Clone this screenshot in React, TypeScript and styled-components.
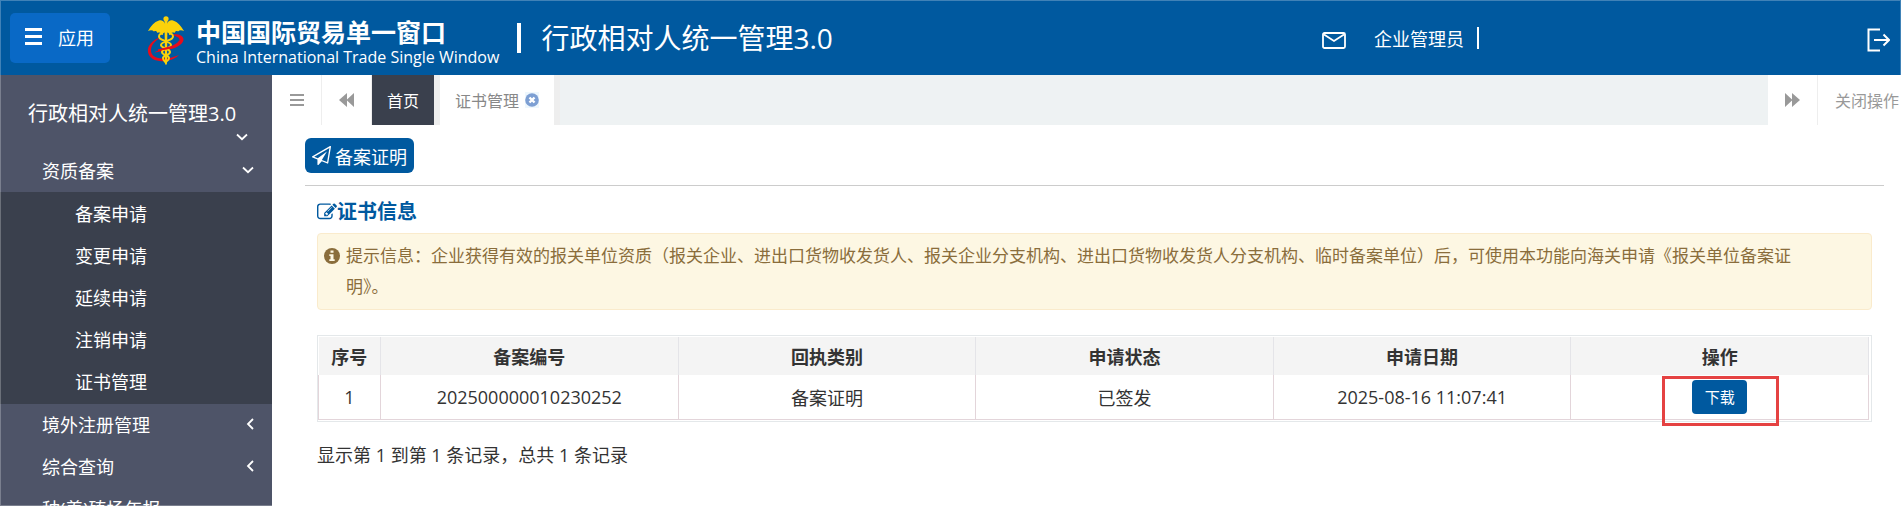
import React from "react";
import styled, { createGlobalStyle } from "styled-components";

const GlobalStyle = createGlobalStyle`
  *, *::before, *::after { box-sizing: border-box; }
  body {
    margin: 0;
    overflow: hidden;
    background: #fff;
    color: #333;
    font-family: "Open Sans", "Noto Sans CJK SC", sans-serif;
    font-size: 18px;
  }
  button { font: inherit; border: 0; cursor: pointer; }
  a { color: inherit; text-decoration: none; }
  svg { display: block; flex: none; }
`;

const Shell = styled.div`
  display: flex;
  flex-direction: column;
  height: 100vh;
  &::after {
    content: "";
    position: fixed;
    inset: 0;
    border: 1px solid rgba(255, 255, 255, 0.25);
    pointer-events: none;
  }
`;

const Header = styled.header`
  display: flex;
  align-items: center;
  flex: none;
  height: 75px;
  padding: 0 11px 0 10px;
  background: #00599f;
  color: #fff;
`;

const AppButton = styled.button`
  display: flex;
  align-items: center;
  gap: 16px;
  width: 100px;
  height: 50px;
  padding: 0 15px 2px;
  border-radius: 5px;
  background: #0969c6;
  color: #fff;
`;

const Brand = styled.a`
  display: flex;
  align-items: center;
  gap: 11px;
  margin-left: 37px;
  padding-top: 6px;
`;

const BrandText = styled.span`
  display: flex;
  flex-direction: column;
  padding-top: 4px;
  white-space: nowrap;
`;

const BrandName = styled.strong`
  font-size: 25px;
  line-height: 28px;
`;

const BrandEnglish = styled.span`
  font-size: 16px;
  line-height: 22px;
`;

const Divider = styled.span<{ $size: "large" | "small" }>`
  width: ${(p) => (p.$size === "large" ? 4 : 2)}px;
  height: ${(p) => (p.$size === "large" ? 30 : 22)}px;
  background: #fff;
`;

const SystemTitle = styled.h1`
  display: flex;
  align-items: center;
  gap: 20px;
  margin: 0 0 0 18px;
  font-size: 28px;
  font-weight: 400;
  line-height: 40px;
  white-space: nowrap;
`;

const UserArea = styled.div`
  display: flex;
  align-items: center;
  margin-left: auto;
`;

const IconButton = styled.button`
  display: flex;
  padding: 5px 0 0;
  background: none;
  color: inherit;
`;

const UserName = styled.span`
  display: flex;
  align-items: center;
  gap: 13px;
  margin: 0 388px 0 28px;
  white-space: nowrap;
`;

const Body = styled.div`
  display: flex;
  flex: 1;
  min-height: 0;
`;

const Sidebar = styled.nav`
  flex: none;
  width: 272px;
  overflow: hidden;
  background: #4e5468;
  color: #fff;
`;

const SidebarTitle = styled.button`
  display: flex;
  flex-direction: column;
  gap: 4px;
  width: 100%;
  height: 75px;
  padding: 24px 24px 0 28px;
  background: none;
  color: inherit;
  font-size: 20px;
  line-height: 30px;
  text-align: left;
  svg { align-self: flex-end; }
`;

const MenuGroup = styled.button`
  display: flex;
  align-items: center;
  justify-content: space-between;
  width: 100%;
  height: 42px;
  padding: 0 18px 2px 42px;
  background: none;
  color: inherit;
`;

const SubMenu = styled.div`
  display: flex;
  flex-direction: column;
  padding: 1px 0;
  background: #3a404d;
`;

const SubLink = styled.a`
  height: 42px;
  padding-left: 75px;
  line-height: 42px;
`;

const Main = styled.main`
  display: flex;
  flex-direction: column;
  flex: 1;
  min-width: 0;
`;

const TabBar = styled.div`
  display: flex;
  flex: none;
  height: 50px;
  overflow: hidden;
  background: #eef2f3;
  color: #999;
  font-size: 16px;
`;

const TabTool = styled.button`
  display: flex;
  align-items: center;
  justify-content: center;
  flex: none;
  width: 50px;
  padding: 0;
  border-right: 1px solid #eee;
  background: #fff;
  color: #999;
`;

const Tab = styled.button<{ $active?: boolean }>`
  display: flex;
  align-items: center;
  gap: 6px;
  flex: none;
  margin-right: 6px;
  padding: 0 15px;
  background: ${(p) => (p.$active ? "#3a404d" : "#fff")};
  box-shadow: 6px 0 0 #eee;
  color: ${(p) => (p.$active ? "#fff" : "#888")};
`;

const TabSpacer = styled.div`
  flex: 1;
`;

const CloseMenu = styled.button`
  flex: none;
  width: 83px;
  padding: 0 0 0 17px;
  background: #fff;
  color: #999;
  text-align: left;
  white-space: nowrap;
`;

const Content = styled.div`
  padding: 13px 17px 0 33px;
`;

const Toolbar = styled.div`
  padding-bottom: 12px;
  border-bottom: 1px solid #ccc;
`;

const ToolbarButton = styled.button`
  display: flex;
  align-items: center;
  gap: 4px;
  height: 35px;
  padding: 0 7px;
  border-radius: 6px;
  background: #00599f;
  color: #fff;
`;

const Panel = styled.section`
  padding: 11px 12px 0;
`;

const PanelTitle = styled.h2`
  display: flex;
  align-items: center;
  margin: 0 0 6px;
  color: #00599f;
  font-size: 20px;
  line-height: 30px;
`;

const Notice = styled.div`
  display: flex;
  gap: 6px;
  padding: 6px 50px 7px 6px;
  border: 1px solid #faebcc;
  border-radius: 4px;
  background: #fdf7e3;
  color: #8a6d3b;
  font-size: 17px;
  line-height: 31px;
  svg { margin-top: 8px; }
`;

const NoticeText = styled.p`
  margin: 0;
`;

const TableFrame = styled.div`
  margin-top: 25px;
  padding: 1px 2px 1px 0;
  border: 1px solid #e4e8ea;
`;

const Table = styled.table`
  width: 100%;
  border-collapse: collapse;
  table-layout: fixed;
`;

const HeadCell = styled.th`
  height: 38px;
  padding: 0;
  border-right: 1px solid #e4e4e8;
  background: #f4f4f4;
  &:first-child { width: 62px; }
`;

const Cell = styled.td`
  height: 44px;
  padding: 0;
  border: 1px solid #e3d5da;
  border-top: 0;
  text-align: center;
`;

const ActionBox = styled.span`
  position: relative;
  display: flex;
  justify-content: center;
`;

const DownloadButton = styled.button`
  width: 55px;
  height: 34px;
  padding: 0;
  border-radius: 4px;
  background: #00599f;
  color: #fff;
  font-size: 15px;
`;

const Highlight = styled.span`
  position: absolute;
  top: -4px;
  left: 50%;
  width: 117px;
  height: 50px;
  margin-left: -58px;
  border: 3px solid #e54242;
  pointer-events: none;
`;

const Summary = styled.p`
  margin: 18px 0 0;
  line-height: 30px;
`;

const Bars = ({ width, height, thick }: { width: number; height: number; thick: number }) => {
  const mid = Math.floor((height - thick) / 2);
  return (
    <svg width={width} height={height} fill="currentColor" aria-hidden="true">
      {[0, mid, height - thick].map((y) => (
        <rect key={y} y={y} width={width} height={thick} />
      ))}
    </svg>
  );
};

const Rewind = ({ flip }: { flip?: boolean }) => (
  <svg width="15" height="14" viewBox="0 0 15 14" fill="currentColor" aria-hidden="true">
    <path d={flip ? "M0 0l7 6.5V0l8 7-8 7V7.5L0 14z" : "M15 0L8 6.5V0L0 7l8 7V7.5l7 6.5z"} />
  </svg>
);

const Angle = ({ dir }: { dir: "down" | "left" }) => (
  <svg
    width={dir === "down" ? 12 : 8}
    height={dir === "down" ? 8 : 12}
    fill="none"
    stroke="currentColor"
    strokeWidth="1.8"
    aria-hidden="true"
  >
    <path d={dir === "down" ? "M1 1.5l5 4.7 5-4.7" : "M7 1L2 6l5 5"} />
  </svg>
);

const Emblem = () => (
  <svg width="38" height="49" viewBox="0 0 38 49" fill="none" aria-hidden="true">
    <path
      d="M14 21C5 24 0 30 1 36c1 7 9 10 17 9 6-.5 11-3 14-6-5 2-11 4-17 3.500C8 42 3.500 39 4 33.500 4.500 29 8 25 14 21z"
      fill="#e60d1c"
    />
    <path
      d="M23 19c7-2 13 0 13.500 4 .3 4-5 8-12 10-6 1.800-13 2.500-17 3.500 4-3 10-3.500 16-5.500 5-1.700 9-4 9-7 0-2.800-4-4.500-9.500-5z"
      fill="#e60d1c"
    />
    <path
      d="M1 15C4 10 7 6 12 4.500c2.500-.7 4.500.3 5.500 2.500L19 9l1.500-2c1-2.200 3-3.200 5.500-2.500C31 6 34 10 37 15c-2.500-1-4.500-1-6 .5-1.500-.8-2.500-.6-3.500 1.500-1.500-.8-2.500-.3-4 1l-3-1.500h-3l-3 1.500c-1.500-1.300-2.500-1.800-4-1-1-2.100-2-2.300-3.500-1.500-1.500-1.500-3.500-1.500-6-.5z"
      fill="#fbd20a"
    />
    <circle cx="19" cy="2.800" r="2.600" fill="#fbd20a" />
    <path d="M17.500 5h3l-.6 43.500h-1.800z" fill="#fbd20a" />
    <path
      d="M16 18c-4-1-5 2.500-3 4.500 3 2.500 11 3 11 6.500s-9 3.500-9 7 7 3 7 6-3.500 3-4 5M22 18c4-1 5 2.500 3 4.500-3 2.500-11 3-11 6.500s9 3.500 9 7-7 3-7 6 2.500 3 3 5"
      stroke="#fbd20a"
      strokeWidth="2"
    />
    <path d="M33 25c-1.500 3-5 5-10 6.500-4 1.200-8 1.800-12 2.700" stroke="#e60d1c" strokeWidth="2" />
  </svg>
);

const MailIcon = () => (
  <svg width="24" height="17" viewBox="0 0 24 17" fill="none" stroke="currentColor" strokeWidth="1.800" aria-hidden="true">
    <rect x="1" y="1" width="22" height="15" rx="1.500" />
    <path d="M2 2.500l10 6.500 10-6.500" />
  </svg>
);

const LogoutIcon = () => (
  <svg width="23" height="24" viewBox="0 0 23 24" fill="none" stroke="currentColor" strokeWidth="2" aria-hidden="true">
    <path d="M13 1.500H1.500v21H13" />
    <path d="M7 12h14M16.500 6.500L22 12l-5.500 5.500" />
  </svg>
);

const PlaneIcon = () => (
  <svg width="19" height="19" viewBox="0 0 1792 1792" fill="currentColor" aria-hidden="true">
    <path d="M1764 11q33 24 27 64l-256 1536q-5 29-32 45-14 8-31 8-11 0-24-5l-527-215-298 327q-18 21-47 21-14 0-23-4-19-7-30-23.500t-11-36.500v-452l-472-193q-37-14-40-55-3-39 32-59l1664-960q35-21 68 2zm-342 1499l221-1323-1434 827 336 137 863-639-478 797z" />
  </svg>
);

const EditIcon = () => (
  <svg width="20" height="20" viewBox="0 0 1792 1792" fill="currentColor" aria-hidden="true">
    <path d="M888 1184l116-116-152-152-116 116v56h96v96h56zm440-720q-16-16-33 1l-350 350q-17 17-1 33t33-1l350-350q17-17 1-33zm80 594v190q0 119-84.500 203.500t-203.500 84.500h-832q-119 0-203.500-84.500t-84.500-203.500v-832q0-119 84.500-203.500t203.500-84.500h832q63 0 117 25 15 7 18 23 3 17-9 29l-49 49q-14 14-32 8-23-6-45-6h-832q-66 0-113 47t-47 113v832q0 66 47 113t113 47h832q66 0 113-47t47-113v-126q0-13 9-22l64-64q15-15 35-7t20 29zm-96-738l288 288-672 672h-288v-288zm444 132l-92 92-288-288 92-92q28-28 68-28t68 28l152 152q28 28 28 68t-28 68z" />
  </svg>
);

const InfoIcon = () => (
  <svg width="16" height="16" viewBox="0 0 16 16" aria-hidden="true">
    <circle cx="8" cy="8" r="8" fill="currentColor" />
    <path d="M6.500 2.500h3v2.300h-3zM5.300 6.300h4.200v5h1.200V13H5.300v-1.700h1.200V8H5.300z" fill="#fdf7e3" />
  </svg>
);

const CloseIcon = () => (
  <svg width="14" height="16" viewBox="0 0 14 16" aria-hidden="true">
    <rect width="14" height="16" fill="#eef7fd" />
    <circle cx="7" cy="8" r="6.800" fill="#7d9fd3" />
    <path d="M4.500 5.500l5 5M9.500 5.500l-5 5" stroke="#fff" strokeWidth="2.400" />
  </svg>
);

const subItems = ["备案申请", "变更申请", "延续申请", "注销申请", "证书管理"];
const groups = [
  { name: "境外注册管理", nested: true },
  { name: "综合查询", nested: true },
  { name: "种(养)殖场年报", nested: false },
];
const columns = ["序号", "备案编号", "回执类别", "申请状态", "申请日期", "操作"];
const records = [["1", "202500000010230252", "备案证明", "已签发", "2025-08-16 11:07:41"]];

export default function App() {
  return (
    <Shell>
      <GlobalStyle />
      <Header>
        <AppButton>
          <Bars width={17} height={17} thick={3} />
          应用
        </AppButton>
        <Brand href="#">
          <Emblem />
          <BrandText>
            <BrandName>中国国际贸易单一窗口</BrandName>
            <BrandEnglish>China International Trade Single Window</BrandEnglish>
          </BrandText>
        </Brand>
        <SystemTitle>
          <Divider $size="large" />
          行政相对人统一管理3.0
        </SystemTitle>
        <UserArea>
          <IconButton aria-label="消息">
            <MailIcon />
          </IconButton>
          <UserName>
            企业管理员
            <Divider $size="small" />
          </UserName>
          <IconButton aria-label="退出">
            <LogoutIcon />
          </IconButton>
        </UserArea>
      </Header>
      <Body>
        <Sidebar>
          <SidebarTitle>
            行政相对人统一管理3.0
            <Angle dir="down" />
          </SidebarTitle>
          <MenuGroup>
            资质备案
            <Angle dir="down" />
          </MenuGroup>
          <SubMenu>
            {subItems.map((item) => (
              <SubLink key={item} href="#">
                {item}
              </SubLink>
            ))}
          </SubMenu>
          {groups.map((group) => (
            <MenuGroup key={group.name}>
              {group.name}
              {group.nested && <Angle dir="left" />}
            </MenuGroup>
          ))}
        </Sidebar>
        <Main>
          <TabBar>
            <TabTool aria-label="菜单">
              <Bars width={14} height={12} thick={2} />
            </TabTool>
            <TabTool aria-label="向左">
              <Rewind />
            </TabTool>
            <Tab $active>首页</Tab>
            <Tab>
              证书管理
              <CloseIcon />
            </Tab>
            <TabSpacer />
            <TabTool aria-label="向右">
              <Rewind flip />
            </TabTool>
            <CloseMenu>关闭操作</CloseMenu>
          </TabBar>
          <Content>
            <Toolbar>
              <ToolbarButton>
                <PlaneIcon />
                备案证明
              </ToolbarButton>
            </Toolbar>
            <Panel>
              <PanelTitle>
                <EditIcon />
                证书信息
              </PanelTitle>
              <Notice>
                <InfoIcon />
                <NoticeText>
                  提示信息：企业获得有效的报关单位资质（报关企业、进出口货物收发货人、报关企业分支机构、进出口货物收发货人分支机构、临时备案单位）后，可使用本功能向海关申请《报关单位备案证明》。
                </NoticeText>
              </Notice>
              <TableFrame>
                <Table>
                  <thead>
                    <tr>
                      {columns.map((column) => (
                        <HeadCell key={column} scope="col">
                          {column}
                        </HeadCell>
                      ))}
                    </tr>
                  </thead>
                  <tbody>
                    {records.map((record) => (
                      <tr key={record[1]}>
                        {record.map((value) => (
                          <Cell key={value}>{value}</Cell>
                        ))}
                        <Cell>
                          <ActionBox>
                            <DownloadButton>下载</DownloadButton>
                            <Highlight />
                          </ActionBox>
                        </Cell>
                      </tr>
                    ))}
                  </tbody>
                </Table>
              </TableFrame>
              <Summary>显示第 1 到第 1 条记录，总共 1 条记录</Summary>
            </Panel>
          </Content>
        </Main>
      </Body>
    </Shell>
  );
}
